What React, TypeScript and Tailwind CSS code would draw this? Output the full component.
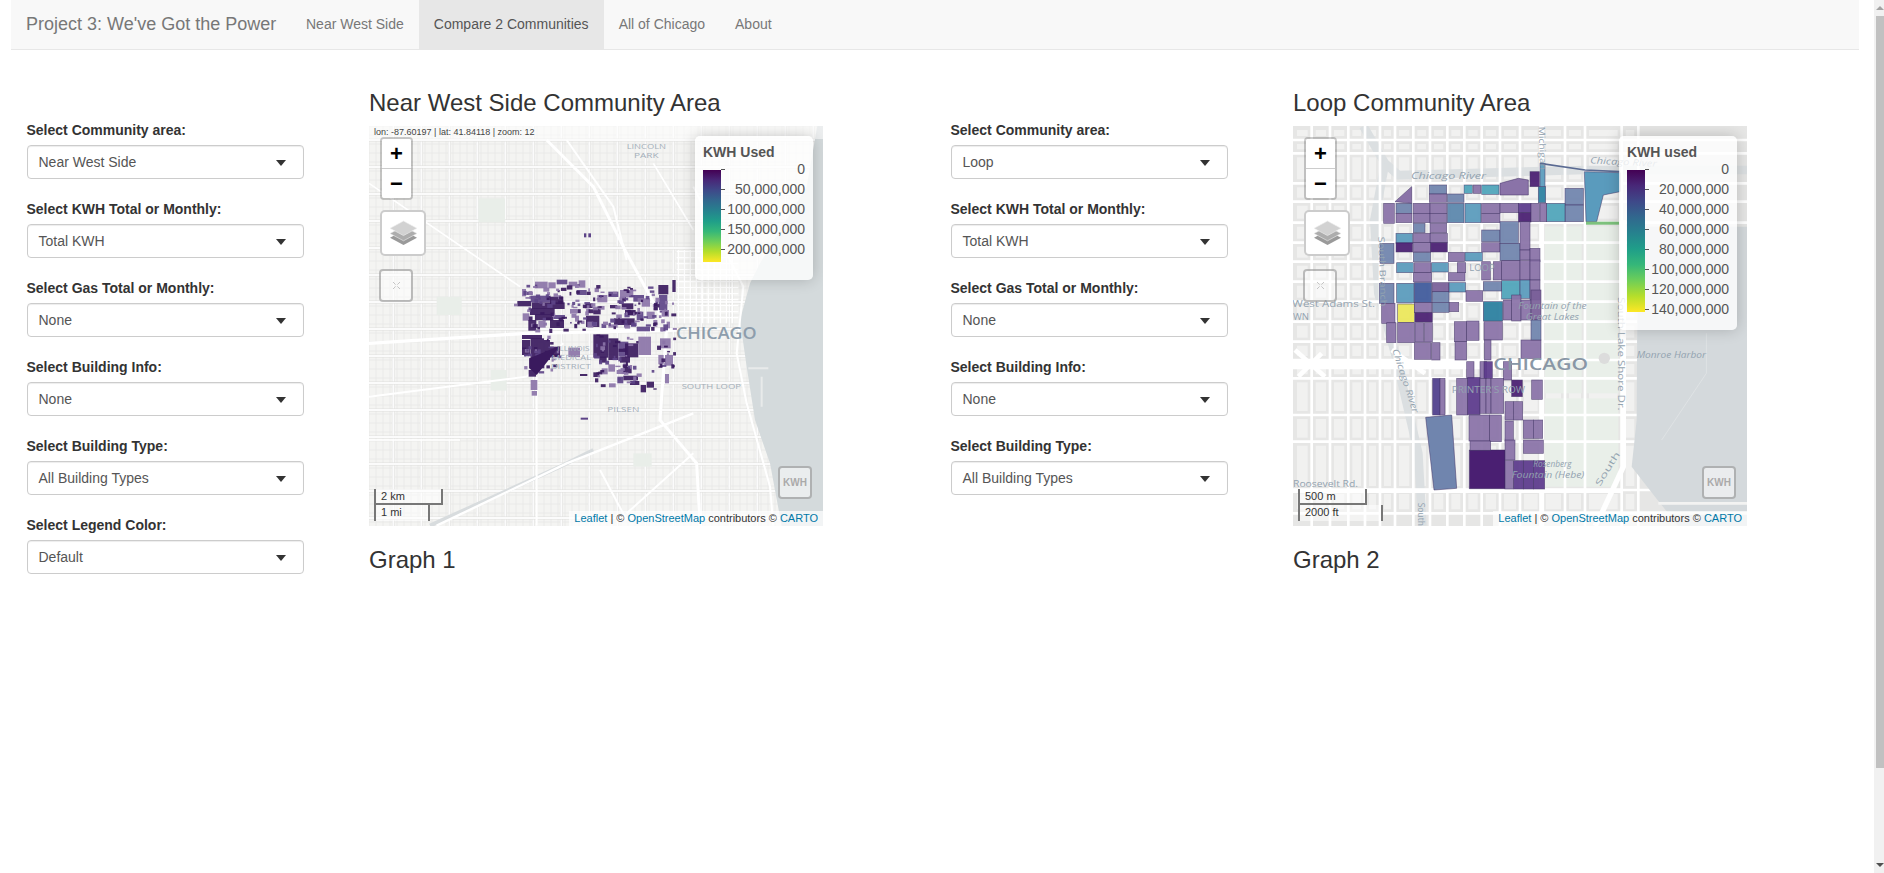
import type { ReactNode } from "react";

const sans = "font-['Liberation_Sans',Arial,sans-serif]";

type Block = [number, number, number, number, string];

// ---- map 1 polygons, coords from the cluster crop
const L = "#8b74a8";
const M = "#5d4488";
const D = "#3a1a5e";

const westBlocks: Block[] = [
  [75, 20, 38, 20, L], [115, 22, 22, 18, L], [140, 14, 32, 14, M], [176, 20, 26, 14, L], [206, 16, 20, 22, L],
  [100, 38, 18, 12, L], [36, 42, 12, 22, L], [50, 50, 18, 10, M], [22, 78, 42, 16, D], [12, 86, 10, 8, L],
  [62, 62, 60, 20, M], [66, 82, 98, 20, D], [120, 65, 40, 22, D], [60, 100, 74, 20, D], [38, 115, 20, 22, L],
  [75, 118, 55, 18, D], [55, 135, 24, 32, D], [120, 135, 42, 24, D], [85, 138, 22, 20, L], [130, 120, 35, 12, M],
  [180, 102, 22, 14, L], [195, 122, 12, 18, L], [200, 45, 30, 15, M], [230, 50, 12, 10, D], [226, 85, 22, 14, D],
  [228, 122, 40, 34, D], [250, 100, 22, 18, D], [232, 140, 18, 18, L], [262, 60, 30, 22, L], [295, 50, 30, 16, M],
  [300, 90, 22, 10, D], [330, 45, 40, 22, L], [335, 85, 35, 18, D], [345, 105, 32, 16, D], [312, 130, 62, 20, D],
  [295, 148, 28, 10, L], [380, 155, 40, 14, M], [370, 60, 32, 20, M], [395, 70, 25, 25, L], [410, 110, 24, 22, L],
  [380, 110, 20, 25, M], [445, 30, 30, 28, D], [447, 60, 25, 45, M], [487, 15, 10, 36, D], [455, 105, 22, 20, L],
  [430, 135, 12, 20, L], [470, 140, 10, 20, L], [460, 148, 14, 18, M], [36, 180, 60, 12, D], [36, 195, 25, 45, D],
  [62, 190, 40, 60, D], [102, 195, 18, 60, D], [58, 250, 45, 30, D], [120, 215, 30, 30, D], [56, 285, 22, 20, D],
  [62, 315, 20, 30, L], [65, 348, 16, 14, L], [175, 218, 35, 28, L], [112, 182, 10, 10, L], [42, 238, 14, 6, M],
  [250, 178, 45, 70, D], [295, 190, 30, 65, D], [325, 200, 30, 45, M], [345, 205, 40, 42, D], [385, 185, 38, 55, L],
  [268, 245, 22, 18, D], [330, 245, 30, 18, D], [295, 268, 20, 22, L], [320, 285, 25, 12, L], [340, 275, 25, 20, D],
  [340, 302, 44, 14, D], [360, 318, 28, 12, D], [297, 325, 20, 12, L], [322, 305, 18, 20, M], [250, 292, 18, 14, D],
  [255, 310, 10, 12, D], [275, 280, 18, 18, L], [210, 297, 22, 6, D], [392, 330, 16, 22, D], [410, 320, 22, 18, D],
  [430, 340, 10, 4, D], [465, 297, 12, 28, L], [450, 190, 32, 30, L], [445, 240, 16, 28, L], [465, 240, 24, 32, L],
  [425, 285, 8, 8, M], [340, 265, 12, 10, L],
];

// broken-up lots, scattered over the places where the map is busiest
function scatterLots(): Block[] {
  const out: Block[] = [];
  let n = 1;
  const next = () => {
    const v = Math.sin(n++ * 12.9898) * 43758.5453;
    return v - Math.floor(v);
  };
  const zones: [number, number, number, number, number][] = [
    [40, 25, 200, 140, 70],
    [240, 30, 250, 130, 90],
    [36, 180, 110, 110, 30],
    [250, 178, 130, 150, 45],
    [440, 180, 50, 100, 14],
  ];
  for (const [zx, zy, zw, zh, count] of zones) {
    for (let i = 0; i < count; i++) {
      const roll = next();
      out.push([zx + next() * zw, zy + next() * zh, 5 + next() * 12, 4 + next() * 9, roll < 0.4 ? D : roll < 0.65 ? M : L]);
    }
  }
  return out;
}

// ---- map 2 polygons, coords from the map crop
const A = "#8a73a8";
const A2 = "#7a6099";
const B = "#7085ae";
const C = "#5a9bbd";
const T = "#4fa5bb";
const H = "#2a7fa0";
const E = "#4a1f72";
const E2 = "#5c3a8c";
const G = "#3f5a9c";
const Y = "#ece85a";

const loopBlocks: Block[] = [
  [735, 155, 28, 45, E], [760, 200, 22, 48, H], [765, 130, 15, 70, C], [840, 205, 55, 50, B], [840, 255, 55, 50, B],
  [785, 250, 55, 55, T], [590, 195, 52, 28, T], [565, 195, 22, 25, A], [537, 195, 25, 25, T], [433, 195, 52, 27, B],
  [433, 222, 52, 25, A], [487, 222, 50, 25, B], [296, 250, 32, 60, A], [333, 250, 48, 30, B], [333, 280, 48, 28, A],
  [385, 250, 50, 30, A], [385, 280, 50, 28, A], [435, 250, 50, 30, A], [435, 280, 50, 28, A], [487, 250, 50, 58, "#5b87ad"],
  [540, 250, 48, 58, C], [590, 250, 55, 30, A], [590, 280, 55, 28, A], [645, 250, 55, 28, A], [700, 250, 38, 28, E2],
  [700, 278, 38, 28, E], [738, 250, 25, 55, A], [765, 250, 20, 55, A], [385, 310, 35, 28, B], [435, 310, 50, 28, A],
  [333, 340, 50, 30, C], [385, 340, 52, 28, A], [435, 340, 52, 28, A], [333, 368, 50, 28, E], [385, 368, 52, 28, A],
  [437, 368, 50, 28, E], [285, 370, 42, 60, B], [385, 397, 52, 28, B], [490, 397, 48, 28, A], [540, 397, 52, 26, C],
  [590, 330, 55, 35, B], [590, 368, 55, 28, A], [645, 305, 55, 65, B], [645, 370, 60, 52, B], [705, 305, 30, 85, A],
  [705, 390, 30, 30, A], [735, 385, 30, 40, A], [335, 428, 50, 30, C], [388, 428, 50, 30, A], [440, 428, 50, 28, C],
  [490, 458, 50, 25, A], [517, 428, 25, 30, A], [385, 458, 55, 28, A], [283, 490, 44, 60, B], [335, 490, 52, 58, C],
  [388, 488, 52, 60, G], [442, 488, 50, 28, A2], [442, 515, 50, 32, B], [492, 488, 50, 28, C], [543, 512, 50, 32, A],
  [590, 425, 26, 55, A], [625, 425, 25, 55, A], [650, 422, 55, 58, A], [705, 422, 30, 58, A], [735, 420, 30, 60, A],
  [595, 485, 55, 28, B], [650, 482, 55, 55, T], [705, 480, 30, 55, C], [735, 480, 30, 60, A], [442, 547, 50, 30, B],
  [493, 547, 28, 28, A], [338, 552, 50, 55, Y], [388, 548, 52, 30, A], [390, 578, 52, 28, E], [290, 550, 40, 60, A],
  [305, 608, 28, 60, A], [338, 608, 50, 60, A], [390, 608, 26, 58, A], [418, 608, 24, 58, A], [595, 545, 58, 58, H],
  [655, 540, 25, 60, A], [680, 525, 28, 78, A], [708, 540, 30, 60, A], [738, 510, 30, 90, A2], [508, 605, 37, 60, A],
  [545, 603, 37, 58, A], [597, 605, 55, 55, A], [510, 665, 35, 55, A], [598, 660, 20, 60, A], [388, 668, 50, 50, A],
  [440, 668, 25, 52, A], [708, 660, 60, 55, A], [738, 600, 30, 60, B], [545, 725, 22, 50, A], [585, 725, 20, 50, A],
  [597, 725, 25, 50, E2], [655, 725, 25, 55, A], [443, 775, 22, 110, "#4f3f8c"], [465, 775, 15, 110, A], [515, 775, 33, 110, A],
  [548, 772, 37, 112, E2], [585, 775, 18, 105, A], [603, 775, 15, 105, A], [618, 775, 38, 105, A], [680, 780, 32, 50, E],
  [740, 780, 32, 58, A], [552, 885, 62, 78, A], [614, 885, 35, 80, A], [660, 845, 25, 55, A], [685, 845, 28, 55, A],
  [660, 903, 25, 60, A], [715, 900, 30, 55, A], [745, 900, 28, 55, A], [660, 960, 30, 60, A], [715, 960, 60, 40, A],
  [660, 1022, 25, 85, A], [686, 1022, 30, 85, E2], [716, 1022, 30, 85, E2], [746, 1022, 33, 85, E2],
  [555, 963, 62, 28, A],
];

function range(from: number, to: number, step: number) {
  const out: number[] = [];
  for (let v = from; v <= to; v += step) out.push(v);
  return out;
}

function WestMapArt() {
  const lots = scatterLots();
  return (
    <svg viewBox="27 18 1362 1200" className="block w-full h-full font-['Open_Sans',sans-serif]">
      <rect x="27" y="18" width="1362" height="1200" fill="#f4f4f2" />
      {/* street grid */}
      {range(27, 1389, 21).map((x) => (
        <line key={`a${x}`} x1={x} y1="18" x2={x} y2="1218" stroke="#e7e7e5" strokeWidth="2" />
      ))}
      {range(18, 1218, 27).map((y) => (
        <line key={`b${y}`} x1="27" y1={y} x2="1389" y2={y} stroke="#e7e7e5" strokeWidth="2" />
      ))}
      {range(100, 1389, 84).map((x) => (
        <g key={`c${x}`}>
          <line x1={x} y1="18" x2={x} y2="1218" stroke="#dfdfdd" strokeWidth="9" />
          <line x1={x} y1="18" x2={x} y2="1218" stroke="#fbfbfb" strokeWidth="6" />
        </g>
      ))}
      {range(60, 1218, 81).map((y) => (
        <g key={`d${y}`}>
          <line x1="27" y1={y} x2="1389" y2={y} stroke="#dfdfdd" strokeWidth="9" />
          <line x1="27" y1={y} x2="1389" y2={y} stroke="#fbfbfb" strokeWidth="6" />
        </g>
      ))}
      {/* parks */}
      <rect x="355" y="235" width="80" height="72" fill="#e9eee9" />
      <rect x="230" y="530" width="75" height="55" fill="#e9eee9" />
      <rect x="392" y="750" width="48" height="62" fill="#e9eee9" />
      <rect x="820" y="1000" width="55" height="40" fill="#e9eee9" />
      {/* the Loop's tight grid */}
      {range(955, 1130, 18).map((x) => (
        <line key={`e${x}`} x1={x} y1="390" x2={x} y2="610" stroke="#ffffff" strokeWidth="4" />
      ))}
      {range(395, 610, 18).map((y) => (
        <line key={`f${y}`} x1="950" y1={y} x2="1135" y2={y} stroke="#ffffff" strokeWidth="4" />
      ))}
      {/* canal + expressways */}
      <path d="M210 1217 L600 1040 L700 990" fill="none" stroke="#d8dcde" strokeWidth="12" />
      <path d="M27 670 L500 640 L950 630" fill="none" stroke="#ffffff" strokeWidth="10" />
      <path d="M560 60 L700 200 L800 400 L920 620 L900 900 L1010 1030 L1020 1217" fill="none" stroke="#ffffff" strokeWidth="9" />
      <path d="M620 60 L760 260 L800 420" fill="none" stroke="#ffffff" strokeWidth="6" />
      <path d="M27 190 L480 500" fill="none" stroke="#ffffff" strokeWidth="5" />
      <path d="M230 1217 L620 1030 L1000 880" fill="none" stroke="#ffffff" strokeWidth="7" />
      <path d="M27 830 L500 770 L610 670" fill="none" stroke="#ffffff" strokeWidth="6" />
      <path d="M530 770 L530 1217 M720 1050 L800 1200 M800 1180 L1000 1000" fill="none" stroke="#ffffff" strokeWidth="6" />
      <path d="M880 130 L1000 330 M27 960 L300 960" fill="none" stroke="#ffffff" strokeWidth="5" />
      {/* lake */}
      <path d="M1389 18 L1372 18 L1340 200 L1200 430 L1170 490 L1140 600 L1160 740 L1185 900 L1230 1030 L1265 1218 L1389 1218 Z" fill="#d4dadc" />
      <path d="M1000 200 L1150 500 L1130 700 L1160 850 L1230 1100 L1240 1217" fill="none" stroke="#ffffff" strokeWidth="6" />
      <path d="M1165 745 L1225 745 M1205 770 L1205 860" fill="none" stroke="#e8eaea" strokeWidth="6" />

      <rect x="672" y="340" width="7" height="12" fill={M} />
      <rect x="685" y="340" width="8" height="12" fill={M} />
      <rect x="662" y="893" width="22" height="6" fill={M} />
      <g transform="translate(450 465)">
        {westBlocks.concat(lots).map((b, i) => (
          <rect key={i} x={b[0]} y={b[1]} width={b[2]} height={b[3]} fill={b[4]} opacity="0.92" />
        ))}
        <polygon points="150,212 80,300 58,280 58,250" fill={D} />
      </g>
      <g fill="#a4afba" fontSize="24">
        <text x="800" y="88" textLength="118" lengthAdjust="spacingAndGlyphs">LINCOLN</text>
        <text x="822" y="114" textLength="74" lengthAdjust="spacingAndGlyphs">PARK</text>
        <text x="965" y="808" textLength="178" lengthAdjust="spacingAndGlyphs">SOUTH LOOP</text>
        <text x="742" y="876" textLength="96" lengthAdjust="spacingAndGlyphs">PILSEN</text>
        <text x="592" y="694" textLength="96" lengthAdjust="spacingAndGlyphs">ILLINOIS</text>
        <text x="575" y="721" textLength="118" lengthAdjust="spacingAndGlyphs">MEDICAL</text>
        <text x="572" y="747" textLength="120" lengthAdjust="spacingAndGlyphs">DISTRICT</text>
      </g>
      <text x="948" y="656" fill="#8d9dac" fontSize="47" fontWeight="600" textLength="242" lengthAdjust="spacingAndGlyphs">CHICAGO</text>
    </svg>
  );
}

const loopX = [24, 80, 135, 190, 240, 285, 330, 385, 435, 487, 538, 590, 645, 705, 770, 840, 900, 1010, 1060];
const loopY = [18, 60, 100, 190, 245, 308, 368, 425, 485, 545, 605, 665, 720, 775, 885, 965, 1110, 1180];

function LoopMapArt() {
  return (
    <svg viewBox="24 18 1362 1200" className="block w-full h-full font-['Open_Sans',sans-serif]">
      <rect x="24" y="18" width="1362" height="1200" fill="#e6e6e5" />
      {/* lighter buildings inside each block */}
      {loopX.slice(0, -1).map((x, i) =>
        loopY.slice(0, -1).map((y, j) => (
          <rect
            key={`${i}-${j}`}
            x={x + 12}
            y={y + 12}
            width={loopX[i + 1] - x - 24}
            height={loopY[j + 1] - y - 24}
            fill="#f1f1f0"
          />
        )),
      )}
      {/* river */}
      <path d="M235 18 L300 130 L340 165 L900 150 L1386 150" fill="none" stroke="#dbdfe1" strokeWidth="26" />
      <path d="M300 130 L268 300 L280 520 L330 700 L400 1000 L412 1217" fill="none" stroke="#dbdfe1" strokeWidth="26" />
      {/* Grant Park */}
      <rect x="780" y="320" width="110" height="160" fill="#e9efe9" />
      <rect x="905" y="320" width="95" height="160" fill="#e9efe9" />
      <rect x="780" y="490" width="110" height="330" fill="#e9efe9" />
      <rect x="905" y="490" width="95" height="330" fill="#e9efe9" />
      <rect x="780" y="835" width="220" height="265" fill="#e9efe9" />
      {/* streets */}
      {loopX.slice(1).map((x) => (
        <line key={x} x1={x} y1="18" x2={x} y2="1218" stroke="#ffffff" strokeWidth="8" />
      ))}
      {loopY.slice(1).map((y) => (
        <line key={y} x1="24" y1={y} x2="1386" y2={y} stroke="#ffffff" strokeWidth="8" />
      ))}
      <path d="M24 735 L770 735" stroke="#ffffff" strokeWidth="26" />
      <path d="M30 690 L120 770 M40 770 L110 700 M320 690 L420 760" stroke="#ffffff" strokeWidth="14" />
      <path d="M770 18 L770 1218" stroke="#ffffff" strokeWidth="15" />
      <path d="M1015 300 L1015 1040 L950 1180 L930 1218" fill="none" stroke="#ffffff" strokeWidth="16" />
      <path d="M24 1112 L1010 1112" stroke="#ffffff" strokeWidth="14" />
      {/* lake */}
      <path d="M1058 320 L1386 320 L1386 1218 L1180 1218 L1110 1130 L1040 1040 L1055 900 Z" fill="#d4d9dc" />
      <path d="M1264 640 L1264 760 L1130 960" fill="none" stroke="#e4e7e8" strokeWidth="2" />
      <path d="M1120 1150 L1386 1150 M1130 1180 L1386 1180" stroke="#f3f3f2" strokeWidth="8" />
      <circle cx="958" cy="715" r="17" fill="#dcdcdc" />

      {/* buildings */}
      <g stroke="#3f2f63" strokeOpacity="0.75" strokeWidth="2">
        <polygon points="898,155 1005,158 1005,215 955,225 935,305 903,305" fill={C} />
        <polygon points="645,190 700,175 730,180 730,225 645,225" fill={A} />
        <polygon points="330,245 380,200 380,250" fill={A} />
        <polygon points="422,892 500,885 515,1105 447,1110" fill={B} />
        <polygon points="553,990 660,990 660,1106 553,1106" fill={E} />
        {loopBlocks.map((b, i) => (
          <rect key={i} x={b[0]} y={b[1]} width={b[2]} height={b[3]} fill={b[4]} opacity="0.93" />
        ))}
      </g>
      <path d="M765 130 L900 150 L1005 155" fill="none" stroke="#5a6a92" strokeWidth="5" />
      <rect x="903" y="305" width="100" height="9" fill="#7dc27d" />

      <g fill="#93a3b0" fontSize="27" fontStyle="italic">
        <text x="378" y="176" textLength="225" lengthAdjust="spacingAndGlyphs">Chicago River</text>
        <text x="915" y="130" textLength="200" lengthAdjust="spacingAndGlyphs" transform="rotate(3 915 130)">Chicago River</text>
        <text x="700" y="566" textLength="205" lengthAdjust="spacingAndGlyphs">Fountain of the</text>
        <text x="722" y="599" textLength="160" lengthAdjust="spacingAndGlyphs">Great Lakes</text>
        <text x="1055" y="714" textLength="208" lengthAdjust="spacingAndGlyphs">Monroe Harbor</text>
        <text x="745" y="1042" textLength="115" lengthAdjust="spacingAndGlyphs">Rosenberg</text>
        <text x="680" y="1075" textLength="218" lengthAdjust="spacingAndGlyphs">Fountain (Hebe)</text>
        <text x="322" y="690" textLength="200" lengthAdjust="spacingAndGlyphs" transform="rotate(72 322 690)">Chicago River</text>
      </g>
      <g fill="#93a3b0" fontSize="26">
        <text x="22" y="562" textLength="248" lengthAdjust="spacingAndGlyphs">West Adams St.</text>
        <text x="24" y="600" textLength="48" lengthAdjust="spacingAndGlyphs">WN</text>
        <text x="553" y="452" textLength="76" lengthAdjust="spacingAndGlyphs">LOOP</text>
        <text x="500" y="820" textLength="220" lengthAdjust="spacingAndGlyphs">PRINTER'S ROW</text>
        <text x="24" y="1102" textLength="195" lengthAdjust="spacingAndGlyphs">Roosevelt Rd.</text>
        <text x="761" y="20" textLength="130" lengthAdjust="spacingAndGlyphs" transform="rotate(88 761 20)">Michigan</text>
        <text x="998" y="532" textLength="340" lengthAdjust="spacingAndGlyphs" transform="rotate(90 998 532)">South Lake Shore Dr.</text>
        <text x="945" y="1100" textLength="115" lengthAdjust="spacingAndGlyphs" transform="rotate(-58 945 1100)">South</text>
        <text x="280" y="350" textLength="210" lengthAdjust="spacingAndGlyphs" transform="rotate(88 280 350)">South Branch</text>
        <text x="398" y="1148" textLength="70" lengthAdjust="spacingAndGlyphs" transform="rotate(90 398 1148)">South</text>
      </g>
      <text x="625" y="750" fill="#8997a6" fontSize="46" fontWeight="600" textLength="284" lengthAdjust="spacingAndGlyphs">CHICAGO</text>
    </svg>
  );
}

function LayersIcon() {
  return (
    <svg viewBox="0 0 26 26" className="w-[27px] h-[27px]">
      <polygon points="13,10 26,17 13,24 0,17" fill="#9a9a9a" />
      <polygon points="13,6 26,13 13,20 0,13" fill="#adadad" stroke="#ececec" strokeWidth="0.6" />
      <polygon points="13,1 26,8 13,15 0,8" fill="#d2d2d2" stroke="#f0f0f0" strokeWidth="0.6" />
    </svg>
  );
}

function HomeIcon() {
  return (
    <svg viewBox="0 0 8 8" className="w-[7px] h-[7px]" fill="none" stroke="#bdbdbd" strokeWidth="1">
      <path d="M0 0 L3 3 M8 0 L5 3 M0 8 L3 5 M8 8 L5 5" />
    </svg>
  );
}

function Legend({ title, labels, barHeight }: { title: string; labels: string[]; barHeight: string }) {
  return (
    <div className="absolute right-[10px] top-[10px] w-[118px] rounded-[5px] bg-white/80 pt-[6px] pr-[8px] pb-[18px] pl-[8px] shadow-[0_0_15px_rgba(0,0,0,0.2)]">
      <div className="mb-[8px] text-[14px] leading-[20px] font-bold text-[#555]">{title}</div>
      <div className="relative">
        <div
          className={`w-[18px] ${barHeight} bg-[linear-gradient(to_bottom,#440154,#482878,#3e4989,#31688e,#26828e,#1f9e89,#35b779,#6ece58,#b5de2b,#fde725)]`}
        />
        {labels.map((l, i) => (
          <div key={l} className="absolute inset-x-0 flex h-[20px] items-center justify-end" style={{ top: i * 20 - 11 }}>
            <div className="absolute left-[18px] h-px w-[4px] bg-[#555]" />
            <span className="text-[14px] leading-[20px] text-[#555]">{l}</span>
          </div>
        ))}
      </div>
    </div>
  );
}

function LeafletMap({
  art,
  legend,
  coords,
  metric,
  imperial,
  imperialWidth,
}: {
  art: ReactNode;
  legend: ReactNode;
  coords?: string;
  metric: string;
  imperial: string;
  imperialWidth: string;
}) {
  return (
    <div className={`relative h-[400px] w-[454px] overflow-hidden bg-[#f6f6f4] ${sans}`}>
      {art}

      {coords && (
        <div className="absolute inset-x-0 top-0 h-[13px] bg-white/55 pl-[5px] text-[9px] leading-[13px] text-[#444]">
          {coords}
        </div>
      )}

      {/* zoom */}
      <div className="absolute left-[11px] top-[11px] w-[33px] rounded-[4px] border-2 border-black/20 bg-clip-padding">
        <div className="flex h-[30px] items-center justify-center rounded-t-[2px] border-b border-[#ccc] bg-white text-[22px] leading-none font-bold text-black">
          +
        </div>
        <div className="flex h-[29px] items-center justify-center rounded-b-[2px] bg-white text-[22px] leading-none font-bold text-black">
          −
        </div>
      </div>

      {/* layers */}
      <div className="absolute left-[11px] top-[84px] flex h-[46px] w-[46px] items-center justify-center rounded-[5px] border-2 border-black/20 bg-white">
        <LayersIcon />
      </div>

      {/* home button, faded */}
      <div className="absolute left-[10px] top-[143px] flex h-[33px] w-[34px] items-center justify-center rounded-[4px] border-2 border-black/25 bg-white/50">
        <HomeIcon />
      </div>

      {legend}

      {/* layer toggle, faded */}
      <div className="absolute right-[11px] bottom-[27px] flex h-[33px] w-[34px] items-center justify-center rounded-[4px] border-2 border-black/25 bg-white/50 text-[10px] font-bold text-[#aaa]">
        KWH
      </div>

      {/* scale */}
      <div className="absolute left-[5px] bottom-[5px] flex flex-col text-[11px] leading-[14px] text-[#333]">
        <div className="h-[16px] w-[69px] border-2 border-t-0 border-[#777] bg-white/50 pl-[5px]">{metric}</div>
        <div className={`h-[16px] border-2 border-y-0 border-[#777] bg-white/50 pl-[5px] ${imperialWidth}`}>{imperial}</div>
      </div>

      {/* attribution */}
      <div className="absolute right-0 bottom-0 h-[15px] bg-white/70 px-[5px] text-[11px] leading-[15px] text-[#333]">
        <span className="text-[#0078a8]">Leaflet</span> | © <span className="text-[#0078a8]">OpenStreetMap</span> contributors ©{" "}
        <span className="text-[#0078a8]">CARTO</span>
      </div>
    </div>
  );
}

function Select({ label, value }: { label: string; value: string }) {
  return (
    <div className="mb-[20px]">
      <div className="mb-[5px] text-[14px] leading-[20px] font-bold text-[#333]">{label}</div>
      <div className="flex h-[34px] items-center justify-between rounded-[4px] border border-[#ccc] bg-white pt-[1px] pr-[17px] pl-[11px] text-[14px] text-[#555] shadow-[inset_0_1px_1px_rgba(0,0,0,0.075)]">
        <span>{value}</span>
        <span className="h-0 w-0 border-x-[5px] border-t-[6px] border-x-transparent border-t-[#333]" />
      </div>
    </div>
  );
}

const tabs = ["Near West Side", "Compare 2 Communities", "All of Chicago", "About"];

const nwLegend = ["0", "50,000,000", "100,000,000", "150,000,000", "200,000,000"];
const loopLegend = ["0", "20,000,000", "40,000,000", "60,000,000", "80,000,000", "100,000,000", "120,000,000", "140,000,000"];

export default function App() {
  return (
    <div className={`flex h-[873px] w-[1884px] overflow-hidden bg-white text-[#333] ${sans}`}>
      <div className="w-[1874px] px-[11px]">
        {/* Navbar */}
        <div className="flex h-[50px] w-[1848px] items-stretch border-b border-[#e7e7e7] bg-[#f8f8f8]">
          <div className="w-[280px] pt-[14px] pl-[15px] text-[18px] leading-[20px] text-[#777]">
            Project 3: We've Got the Power
          </div>
          <div className="flex">
            <div className="px-[15px] pt-[14px] text-[14px] leading-[20px] text-[#777]">{tabs[0]}</div>
            <div className="bg-[#e7e7e7] px-[15px] pt-[14px] text-[14px] leading-[20px] text-[#555]">{tabs[1]}</div>
            <div className="px-[15px] pt-[14px] text-[14px] leading-[20px] text-[#777]">{tabs[2]}</div>
            <div className="px-[15px] pt-[14px] text-[14px] leading-[20px] text-[#777]">{tabs[3]}</div>
          </div>
        </div>

        {/* Compare 2 Communities */}
        <div className="flex pl-[15.5px]">
          <div className="mt-[70px] w-[277px]">
            <Select label="Select Community area:" value="Near West Side" />
            <Select label="Select KWH Total or Monthly:" value="Total KWH" />
            <Select label="Select Gas Total or Monthly:" value="None" />
            <Select label="Select Building Info:" value="None" />
            <Select label="Select Building Type:" value="All Building Types" />
            <Select label="Select Legend Color:" value="Default" />
          </div>

          <div className="mt-[40px] ml-[65.5px] w-[454px]">
            <h3 className="mb-[10px] text-[24px] leading-[26px] font-normal">Near West Side Community Area</h3>
            <LeafletMap
              art={<WestMapArt />}
              legend={<Legend title="KWH Used" labels={nwLegend} barHeight="h-[92px]" />}
              coords="lon: -87.60197 | lat: 41.84118 | zoom: 12"
              metric="2 km"
              imperial="1 mi"
              imperialWidth="w-[56px]"
            />
            <h3 className="mt-[21px] text-[24px] leading-[26px] font-normal">Graph 1</h3>
          </div>

          <div className="mt-[70px] ml-[127.5px] w-[277px]">
            <Select label="Select Community area:" value="Loop" />
            <Select label="Select KWH Total or Monthly:" value="Total KWH" />
            <Select label="Select Gas Total or Monthly:" value="None" />
            <Select label="Select Building Info:" value="None" />
            <Select label="Select Building Type:" value="All Building Types" />
          </div>

          <div className="mt-[40px] ml-[65.5px] w-[454px]">
            <h3 className="mb-[10px] text-[24px] leading-[26px] font-normal">Loop Community Area</h3>
            <LeafletMap
              art={<LoopMapArt />}
              legend={<Legend title="KWH used" labels={loopLegend} barHeight="h-[142px]" />}
              metric="500 m"
              imperial="2000 ft"
              imperialWidth="w-[85px]"
            />
            <h3 className="mt-[21px] text-[24px] leading-[26px] font-normal">Graph 2</h3>
          </div>
        </div>
      </div>

      {/* window scrollbar */}
      <div className="flex h-full w-[10px] flex-col bg-[#f1f1f1] pl-[2px]">
        <div className="flex h-[16px] items-center justify-center">
          <span className="h-0 w-0 border-x-[4px] border-b-[4px] border-x-transparent border-b-[#a3a3a3]" />
        </div>
        <div className="h-[752px] w-full bg-[#c1c1c1]" />
        <div className="flex-1" />
        <div className="flex h-[16px] items-center justify-center">
          <span className="h-0 w-0 border-x-[4px] border-t-[4px] border-x-transparent border-t-[#505050]" />
        </div>
      </div>
    </div>
  );
}
